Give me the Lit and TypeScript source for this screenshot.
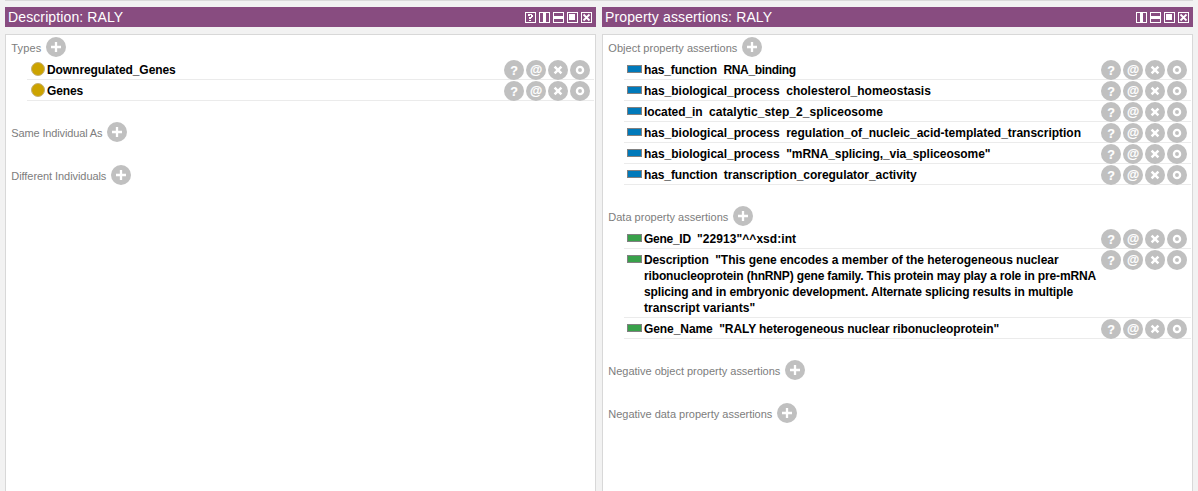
import { LitElement, html, css, svg } from "lit";
import { customElement, property } from "lit/decorators.js";

type Run = [text: string, width: number];
type Row = { kind: "cls" | "obj" | "data"; name: Run; value?: Run[] };
type Section = { title: Run; rows: Row[] };

/* A run of text tracked so that it advances by exactly the given width. */
@customElement("fit-text")
class FitText extends LitElement {
  @property() text = "";
  @property({ type: Number }) width = 0;
  static styles = css`
    :host { display: inline-block; white-space: pre; }
    span { display: inline-block; }
  `;
  updated() {
    const span = this.renderRoot.querySelector("span") as HTMLElement;
    span.style.letterSpacing = "0px";
    const natural = span.getBoundingClientRect().width;
    span.style.letterSpacing = `${(this.width - natural) / this.text.length}px`;
  }
  render() {
    return html`<span>${this.text}</span>`;
  }
}

const run = (r: Run, tail = "") => html`<fit-text .text=${r[0] + tail} .width=${r[1]}></fit-text>`;

@customElement("round-icon")
class RoundIcon extends LitElement {
  @property() kind = "add";
  static styles = css`
    :host { display: block; width: 20px; height: 20px; flex: none; }
    svg { display: block; }
    .txt { font-family: "Liberation Sans", Arial, sans-serif; font-weight: bold; fill: #fff; stroke: #fff; text-anchor: middle; }
  `;
  glyph() {
    switch (this.kind) {
      case "add": return svg`<path d="M5 10H15M10 5V15" stroke="#fff" stroke-width="2.3" />`;
      case "help": return svg`<text class="txt" x="10.1" y="15.4" font-size="12.5" stroke-width="0.2">?</text>`;
      case "at": return svg`<text class="txt" x="10" y="14" font-size="12.5" stroke-width="0.2">@</text>`;
      case "del": return svg`<path d="M6.6 6.6L13.4 13.4M13.4 6.6L6.6 13.4" stroke="#fff" stroke-width="2.5" />`;
      default: return svg`<circle cx="10" cy="10" r="3.1" fill="none" stroke="#fff" stroke-width="2.3" />`;
    }
  }
  render() {
    return html`<svg width="20" height="20" viewBox="0 0 20 20"><circle cx="10" cy="10" r="10" fill="#c0c0c0" />${this.glyph()}</svg>`;
  }
}

@customElement("window-button")
class WindowButton extends LitElement {
  @property() kind = "close";
  static styles = css`
    :host { display: block; width: 11px; height: 11px; }
    svg { display: block; }
  `;
  glyph() {
    switch (this.kind) {
      case "help": return svg`<path d="M3 2H7V3H8V5H7V6H6V7H4V5H6V3H5V4H3ZM4 8H6V9H4Z" fill="#fff" />`;
      case "cols": return svg`<path d="M5.5 1V10" stroke="#fff" stroke-width="3" />`;
      case "rows": return svg`<path d="M1 5.5H10" stroke="#fff" stroke-width="3" />`;
      case "max": return svg`<path d="M2 2H8V8H2Z" fill="#fff" />`;
      default: return svg`<path d="M2.5 2.5L8.5 8.5M8.5 2.5L2.5 8.5" stroke="#fff" stroke-width="1.8" />`;
    }
  }
  render() {
    return html`<svg width="11" height="11" viewBox="0 0 11 11"><rect x="0.5" y="0.5" width="10" height="10" fill="none" stroke="#fff" />${this.glyph()}</svg>`;
  }
}

@customElement("view-panel")
class ViewPanel extends LitElement {
  @property({ attribute: false }) heading: Run = ["", 0];
  @property({ attribute: false }) buttons: string[] = [];
  @property({ attribute: false }) sections: Section[] = [];
  static styles = css`
    :host { display: flex; flex-direction: column; gap: 7px; min-width: 0; }
    .bar { display: flex; justify-content: space-between; height: 20px; box-sizing: border-box; padding: 0 4px 0 3px; background: #884c80; color: #fff; font-size: 14px; line-height: 20px; }
    .buttons { display: flex; gap: 3px; padding-top: 5px; }
    .body { flex: 1; border: 1px solid #d8d8d8; border-bottom: 0; background: #fff; padding: 2px 0 0; }
    .section { margin-bottom: 21px; }
    .head { display: flex; height: 22px; padding-left: 5.3px; gap: 4.7px; color: #7d7d7d; font-size: 11px; line-height: 22px; }
    .row { display: flex; box-sizing: border-box; margin: 0 1px 0 21px; padding: 0 4px 4px 0; border-bottom: 1px solid #ebebeb; font-size: 12px; line-height: 16px; font-weight: bold; color: #000; }
    .mark { flex: none; box-sizing: border-box; }
    .cls { width: 14px; height: 14px; border-radius: 50%; background: #cca300; border: 1px solid #c4b078; margin: 3px 2px -4px 4px; }
    .obj, .data { width: 15px; height: 8px; border: 1px solid #808080; margin: 6px 2px 0 3px; }
    .obj { background: #0079ba; }
    .data { background: #38a14a; }
    .text { flex: 1; min-width: 0; padding-top: 3px; margin-bottom: -3px; }
    .line { display: flex; height: 16px; }
    .tools { display: flex; gap: 2px; height: 16px; padding-top: 1px; margin-bottom: -1px; }
  `;
  render() {
    return html`
      <div class="bar">${run(this.heading)}<div class="buttons">${this.buttons.map((b) => html`<window-button kind=${b}></window-button>`)}</div></div>
      <div class="body">
        ${this.sections.map((s) => html`<div class="section">
          <div class="head">${run(s.title)}<round-icon kind="add"></round-icon></div>
          ${s.rows.map((r) => {
            const [first, ...rest] = r.value ?? [];
            return html`<div class="row">
              <i class="mark ${r.kind}"></i>
              <div class="text">
                <div class="line">${run(r.name, first ? "  " : "")}${first ? run(first) : ""}</div>
                ${rest.map((v) => html`<div class="line">${run(v)}</div>`)}
              </div>
              <div class="tools">${["help", "at", "del", "ring"].map((k) => html`<round-icon kind=${k}></round-icon>`)}</div>
            </div>`;
          })}
        </div>`)}
      </div>`;
  }
}

const left: Section[] = [
  { title: ["Types", 30], rows: [{ kind: "cls", name: ["Downregulated_Genes", 128.7] }, { kind: "cls", name: ["Genes", 36] }] },
  { title: ["Same Individual As", 91], rows: [] },
  { title: ["Different Individuals", 95], rows: [] },
];
const right: Section[] = [
  { title: ["Object property assertions", 129], rows: [
    { kind: "obj", name: ["has_function", 79.4], value: [["RNA_binding", 72.4]] },
    { kind: "obj", name: ["has_biological_process", 142.2], value: [["cholesterol_homeostasis", 144.7]] },
    { kind: "obj", name: ["located_in", 65], value: [["catalytic_step_2_spliceosome", 174]] },
    { kind: "obj", name: ["has_biological_process", 142.2], value: [["regulation_of_nucleic_acid-templated_transcription", 294.8]] },
    { kind: "obj", name: ["has_biological_process", 142.2], value: [['"mRNA_splicing,_via_spliceosome"', 204.2]] },
    { kind: "obj", name: ["has_function", 79.8], value: [["transcription_coregulator_activity", 192.9]] },
  ] },
  { title: ["Data property assertions", 120], rows: [
    { kind: "data", name: ["Gene_ID", 53], value: [['"22913"^^xsd:int', 99.2]] },
    { kind: "data", name: ["Description", 71.2], value: [
      ['"This gene encodes a member of the heterogeneous nuclear', 343.4],
      ["ribonucleoprotein (hnRNP) gene family. This protein may play a role in pre-mRNA", 452],
      ["splicing and in embryonic development. Alternate splicing results in multiple", 429],
      ['transcript variants"', 111.2],
    ] },
    { kind: "data", name: ["Gene_Name", 75.2], value: [['"RALY heterogeneous nuclear ribonucleoprotein"', 279.8]] },
  ] },
  { title: ["Negative object property assertions", 172], rows: [] },
  { title: ["Negative data property assertions", 164], rows: [] },
];

@customElement("app-root")
class AppRoot extends LitElement {
  static styles = css`
    :host { display: block; height: 491px; box-sizing: border-box; padding: 0 5px; background: #f2f2f2; overflow: hidden; font-family: "Liberation Sans", Arial, sans-serif; }
    .frame { box-sizing: border-box; height: 100%; border-top: 1px solid #dadada; padding-top: 6px; display: grid; grid-template-columns: 591px 591px; gap: 6px; }
  `;
  render() {
    return html`<div class="frame">
      <view-panel .heading=${["Description: RALY", 115.3]} .buttons=${["help", "cols", "rows", "max", "close"]} .sections=${left}></view-panel>
      <view-panel .heading=${["Property assertions: RALY", 167.2]} .buttons=${["cols", "rows", "max", "close"]} .sections=${right}></view-panel>
    </div>`;
  }
}
